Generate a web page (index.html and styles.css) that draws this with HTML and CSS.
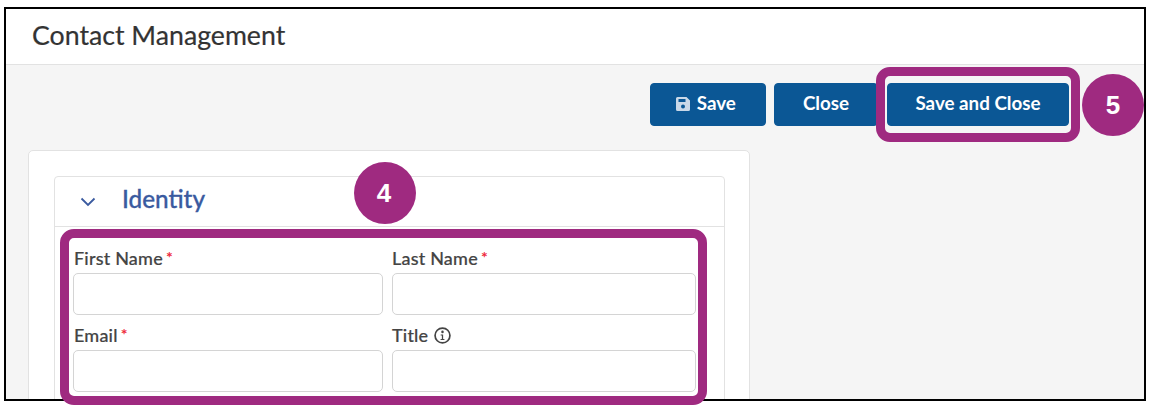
FILE: index.html
```html
<!DOCTYPE html>
<html lang="en">
<head>
  <meta charset="UTF-8">
  <title>Contact Management</title>
  <link rel="stylesheet" href="styles.css">
</head>
<body>

<div class="frame">
  <header class="page-title">Contact Management</header>
  <main class="page-body">
    <div class="toolbar">
      <button class="btn btn-save">
        <svg class="btn-icon" viewBox="0 0 14 14"><path d="M1.5 0h9L14 3.5v9a1.5 1.5 0 0 1-1.500 1.500h-11A1.500 1.500 0 0 1 0 12.500v-11A1.500 1.500 0 0 1 1.500 0z" fill="#c9d8e8"/><rect x="2.500" y="2" width="7" height="3" fill="#0b5795"/><circle cx="7" cy="9.500" r="2" fill="#0b5795"/></svg>
        Save
      </button>
      <button class="btn btn-close">Close</button>
      <button class="btn btn-save-close">Save and Close</button>
    </div>
    <section class="card">
      <div class="panel">
        <div class="panel-head">
          <svg class="chevron" viewBox="0 0 16 10"><path d="M1.500 1.500 8 8l6.500-6.500" fill="none" stroke="#3a5a9f" stroke-width="1.800"/></svg>
          <h2 class="panel-title">Identity</h2>
        </div>
        <div class="fields">
          <div class="field">
            <label class="field-label">First Name<span class="req">*</span></label>
            <input class="field-input" type="text">
          </div>
          <div class="field">
            <label class="field-label">Last Name<span class="req">*</span></label>
            <input class="field-input" type="text">
          </div>
          <div class="field">
            <label class="field-label">Email<span class="req">*</span></label>
            <input class="field-input" type="text">
          </div>
          <div class="field">
            <label class="field-label">Title
              <svg class="info" viewBox="0 0 16 16"><circle cx="8" cy="8" r="7" fill="none" stroke="#444" stroke-width="1.600"/><circle cx="8" cy="4.600" r="1.200" fill="#444"/><path d="M6.300 7h2.300v4.200h1.200v1.100H6.200v-1.100h1.200V8.100H6.300z" fill="#444"/></svg>
            </label>
            <input class="field-input" type="text">
          </div>
        </div>
      </div>
    </section>
  </main>
</div>

<!-- callouts over the screenshot -->
<div class="callout-box callout-form"></div>
<div class="callout-box callout-btn"></div>
<div class="callout-num num-4">4</div>
<div class="callout-num num-5">5</div>

</body>
</html>
```

FILE: styles.css
```css
html, body {
  height: 100%;
}
body {
  margin: 0;
  background: #fff;
  font-family: Lato, "Open Sans", sans-serif;
  color: #333;
  overflow: hidden;
  position: relative;
}
.frame {
  margin: 7px 4px 0;
  height: 394px;
  box-sizing: border-box;
  border: 2px solid #000;
  background: #f5f5f5;
  overflow: hidden;
}
.page-title {
  height: 56px;
  box-sizing: border-box;
  background: #fff;
  border-bottom: 1px solid #e2e2e2;
  padding: 10px 0 0 26px;
  font-size: 26.7px;
  line-height: 32px;
  -webkit-text-stroke: .2px #333;
}
.page-body {
  padding: 18px 0 0 22px;
}
.toolbar {
  display: flex;
  justify-content: flex-end;
  gap: 8px;
  padding-right: 75px;
  height: 43px;
}
.btn {
  height: 43px;
  background: #0b5795;
  border: 1px solid #0b5795;
  border-radius: 4px;
  color: #fff;
  font-family: inherit;
  font-size: 18.8px;
  font-weight: 700;
  padding: 0 0 4px;
}
.btn-save { width: 116px; padding-right: 4px; }
.btn-close { width: 104px; margin-right: 1px; }
.btn-save-close { width: 182px; }
.btn-icon {
  width: 14px;
  height: 14px;
  margin-right: 2px;
  vertical-align: -1px;
}
.card {
  width: 722px;
  box-sizing: border-box;
  margin-top: 24px;
  height: 300px;
  background: #fff;
  border: 1px solid #e2e2e2;
  border-radius: 5px;
  padding: 25px 24px 0 25px;
}
.panel {
  border: 1px solid #e2e2e2;
  border-radius: 4px 4px 0 0;
  height: 300px;
}
.panel-head {
  display: flex;
  align-items: center;
  height: 49px;
  border-bottom: 1px solid #e2e2e2;
  padding-left: 25px;
}
.chevron {
  width: 16px;
  height: 10px;
}
.panel-title {
  margin: 0 0 6px 26px;
  font-size: 24.300px;
  font-weight: 500;
  color: #3a5a9f;
  -webkit-text-stroke: .3px #3a5a9f;
}
.fields {
  display: grid;
  grid-template-columns: 310px 304px;
  column-gap: 9px;
  row-gap: 8px;
  padding: 19px 0 0 18px;
}
.field-label {
  display: block;
  height: 27px;
  font-size: 18px;
  line-height: 24px;
  font-weight: 500;
  letter-spacing: .2px;
  color: #444;
  -webkit-text-stroke: .2px #444;
}
.field:nth-child(odd) .field-label {
  padding-left: 1px;
}
.req {
  color: #ee2a3a;
  margin-left: 3px;
  position: relative;
  top: -2px;
  font-size: 16px;
  font-weight: 700;
  -webkit-text-stroke: 0;
}
.info {
  width: 17px;
  height: 17px;
  margin-left: 1px;
  vertical-align: -2px;
}
.field-input {
  display: block;
  width: 100%;
  height: 42px;
  box-sizing: border-box;
  border: 1px solid #d4d4d4;
  border-radius: 5px;
  background: #fff;
}
.callout-box {
  position: absolute;
  box-sizing: border-box;
  border: 9px solid #9f2a80;
  border-radius: 14px;
}
.callout-form {
  left: 60px;
  top: 229px;
  width: 647px;
  height: 176px;
}
.callout-btn {
  left: 876px;
  top: 67px;
  width: 204px;
  height: 75px;
}
.callout-num {
  position: absolute;
  width: 62px;
  height: 62px;
  border-radius: 50%;
  background: #9f2a80;
  color: #fff;
  font-family: "Liberation Sans", sans-serif;
  font-size: 26px;
  font-weight: 700;
  line-height: 62px;
  text-align: center;
}
.num-4 { left: 354px; top: 162px; padding-right: 0; text-indent: -2px; }
.num-5 { left: 1082px; top: 74px; }
```
